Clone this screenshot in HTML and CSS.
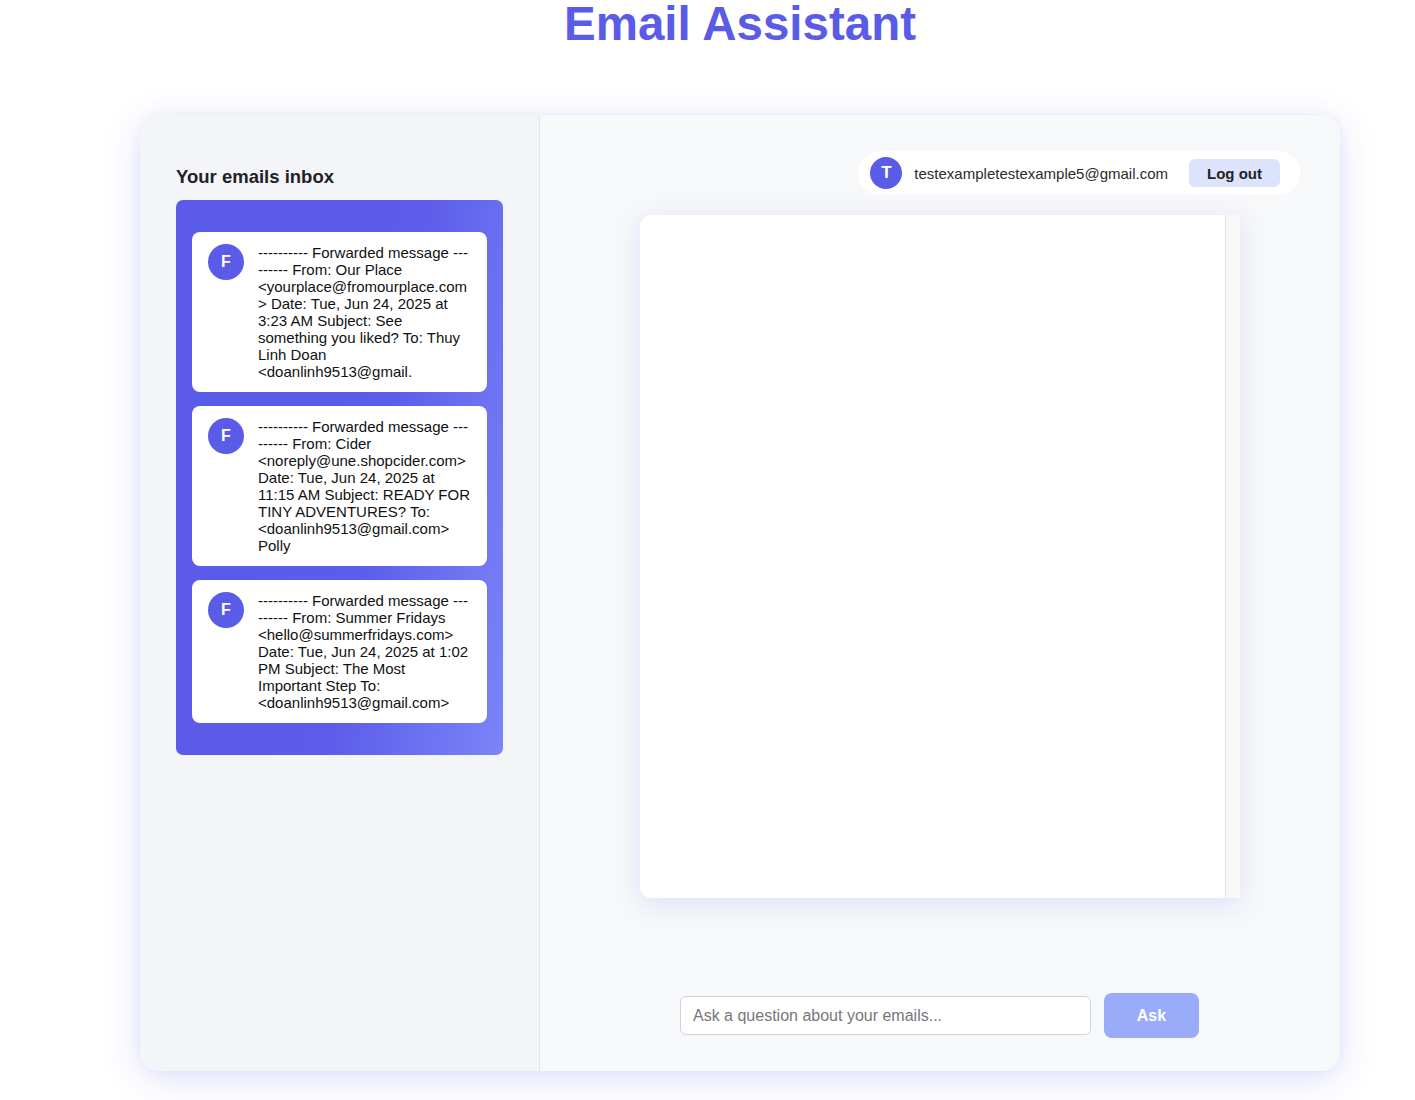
FILE: index.html
```html
<!DOCTYPE html>
<html lang="en">
<head>
<meta charset="utf-8">
<title>Email Assistant</title>
<link rel="stylesheet" href="styles.css">
</head>
<body>
<div class="page">
  <h1 class="title">Email Assistant</h1>
  <main class="app">
    <aside class="inbox">
      <h2 class="inbox-title">Your emails inbox</h2>
      <div class="inbox-list">
        <div class="mail">
          <div class="mail-avatar">F</div>
          <div class="mail-text">---------- Forwarded message --------- From: Our Place &lt;yourplace@fromourplace.com&gt; Date: Tue, Jun 24, 2025 at 3:23 AM Subject: See something you liked? To: Thuy Linh Doan &lt;doanlinh9513@gmail.</div>
        </div>
        <div class="mail">
          <div class="mail-avatar">F</div>
          <div class="mail-text">---------- Forwarded message --------- From: Cider &lt;noreply@une.shopcider.com&gt; Date: Tue, Jun 24, 2025 at 11:15 AM Subject: READY FOR TINY ADVENTURES? To: &lt;doanlinh9513@gmail.com&gt; Polly</div>
        </div>
        <div class="mail">
          <div class="mail-avatar">F</div>
          <div class="mail-text">---------- Forwarded message --------- From: Summer Fridays &lt;hello@summerfridays.com&gt; Date: Tue, Jun 24, 2025 at 1:02 PM Subject: The Most Important Step To: &lt;doanlinh9513@gmail.com&gt;</div>
        </div>
      </div>
    </aside>
    <section class="assistant">
      <div class="header">
        <div class="user-pill">
          <div class="user-avatar">T</div>
          <span class="user-email">testexampletestexample5@gmail.com</span>
          <button class="logout" type="button">Log out</button>
        </div>
      </div>
      <div class="chat"></div>
      <form class="ask-row">
        <input class="ask-input" type="text" placeholder="Ask a question about your emails...">
        <button class="ask-btn" type="button">Ask</button>
      </form>
    </section>
  </main>
</div>
</body>
</html>
```

FILE: styles.css
```css
* { box-sizing: border-box; }

html, body {
  margin: 0;
  padding: 0;
  background: #ffffff;
  font-family: "Liberation Sans", Arial, Helvetica, sans-serif;
}

.page {
  width: 1200px;
  margin-left: 140px;
  padding-bottom: 29px;
}

.title {
  margin: 0;
  font-size: 47.5px;
  line-height: 48px;
  font-weight: 700;
  text-align: center;
  color: #5a5ce8;
}

.app {
  margin-top: 67px;
  height: 956px;
  display: flex;
  border-radius: 18px;
  overflow: hidden;
  background: #f7f8fa;
  box-shadow: 0 8px 36px rgba(99, 102, 241, 0.2), 0 0 10px rgba(99, 102, 241, 0.07);
}

.inbox {
  width: 400px;
  flex: none;
  background: #f4f5f9;
  border-right: 1px solid #e3e5ea;
  padding: 51px 36px 0 36px;
}

.inbox-title {
  margin: 0 0 12px;
  font-size: 18.5px;
  line-height: 22px;
  font-weight: 700;
  color: #222226;
}

.inbox-list {
  display: flex;
  flex-direction: column;
  gap: 14px;
  padding: 32px 16px;
  border-radius: 7px;
  background: linear-gradient(100deg, #5a5ce9 0%, #5b5cea 58%, #7b84f7 100%);
}

.mail {
  display: flex;
  align-items: flex-start;
  gap: 14px;
  padding: 12px 16px;
  background: #ffffff;
  border-radius: 8px;
}

.mail-avatar {
  width: 36px;
  height: 36px;
  flex: none;
  border-radius: 50%;
  background: #5a5ce8;
  color: #ffffff;
  font-weight: 700;
  font-size: 16px;
  display: flex;
  align-items: center;
  justify-content: center;
}

.mail-text {
  flex: 1;
  min-width: 0;
  font-size: 15px;
  line-height: 17px;
  color: #111111;
  overflow-wrap: break-word;
}

.assistant {
  flex: 1;
  display: flex;
  flex-direction: column;
  align-items: center;
  padding: 36px 40px 33px;
  background: #f7f8fa;
}

.header {
  align-self: stretch;
  display: flex;
  justify-content: flex-end;
}

.user-pill {
  display: flex;
  align-items: center;
  height: 44px;
  padding: 0 20px 0 12px;
  background: #ffffff;
  border-radius: 22px;
}

.user-avatar {
  width: 32px;
  height: 32px;
  border-radius: 50%;
  background: #5a5ce8;
  color: #ffffff;
  font-weight: 700;
  font-size: 17px;
  display: flex;
  align-items: center;
  justify-content: center;
}

.user-email {
  margin-left: 12px;
  font-size: 15px;
  color: #2b2b30;
}

.logout {
  margin-left: 21px;
  height: 28px;
  padding: 0 18px;
  border: none;
  border-radius: 6px;
  background: #dde3fb;
  color: #222226;
  font-family: inherit;
  font-size: 15px;
  font-weight: 700;
}

.chat {
  margin-top: 20px;
  width: 600px;
  height: 683px;
  border-radius: 12px 0 0 12px;
  overflow-y: auto;
  background: linear-gradient(to left, #f8f8f8 0, #f8f8f8 14px, #e0e0e0 14px, #e0e0e0 15px, #ffffff 15px);
  box-shadow: 0 6px 26px rgba(99, 102, 241, 0.16);
}

.ask-row {
  margin: auto 0 0 -1px;
  display: flex;
  align-items: center;
  gap: 13px;
}

.ask-input {
  width: 411px;
  height: 39px;
  padding: 0 12px;
  border: 1px solid #cfd3dc;
  border-radius: 6px;
  background: #ffffff;
  font-family: inherit;
  font-size: 16px;
  color: #333;
}

.ask-input::placeholder {
  color: #777779;
}

.ask-btn {
  width: 95px;
  height: 45px;
  border: none;
  border-radius: 8px;
  background: #99abf9;
  color: #ffffff;
  font-family: inherit;
  font-size: 16px;
  font-weight: 700;
}
```
